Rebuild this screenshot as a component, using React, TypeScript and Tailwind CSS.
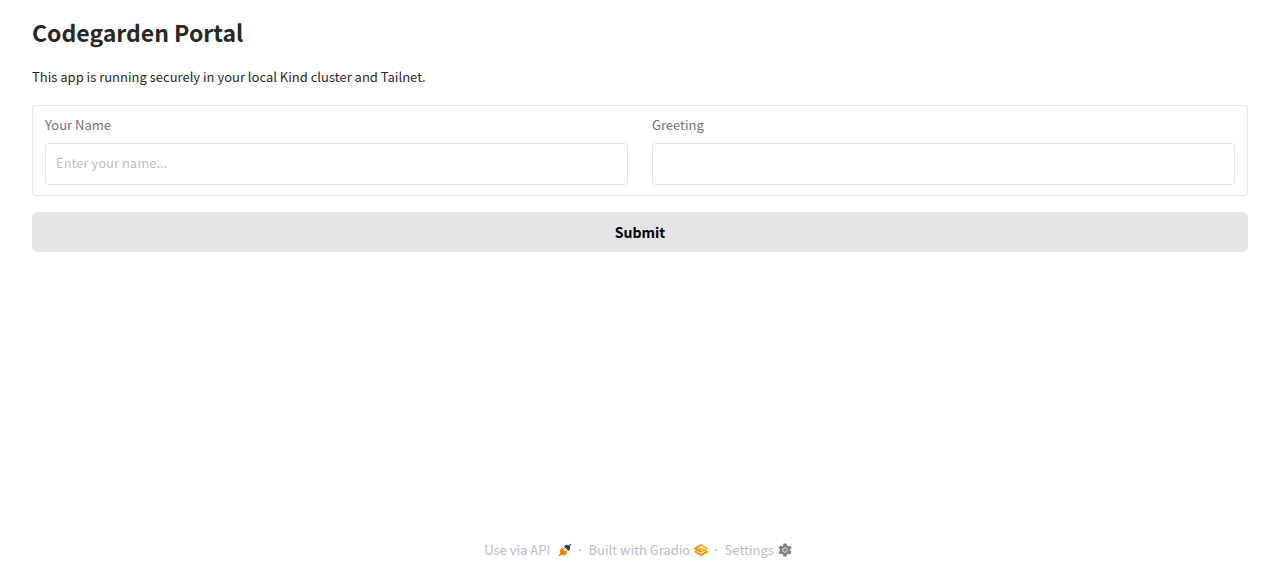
import React, { useState } from "react";


const PlugIcon = () => (
    <svg viewBox="0 0 28 28" className="ml-2 size-3.5" aria-hidden="true">
        <path d="M26.9 2.5 25.5 1.1 21.9 4.7C19.3 2.9 15.9 3.1 13.6 5.4L11.9 7.1 20.9 16.1 22.6 14.4C24.9 12.1 25.1 8.7 23.3 6.1L26.9 2.5Z" fill="#34445b" />
        <path d="M18.9 15.9 17.5 14.5 14.8 17.2 11.2 13.6 13.9 10.9 12.5 9.5 9.8 12.2 7.3 9.7 5.6 11.4C3.3 13.7 3.1 17.1 4.9 19.7L1.1 25.5 2.5 26.9 8.3 23.1C10.9 24.9 14.3 24.7 16.6 22.4L18.3 20.7 16.2 18.6 18.9 15.9Z" fill="#ff7c00" />
    </svg>
);

const GradioIcon = () => (
    <svg viewBox="0 0 28 24" className="ml-1 h-3 w-3.5" fill="none" strokeWidth="3" strokeLinejoin="round" aria-hidden="true">
        <path d="M2 15 14 8.500 26 15 14 22Z" stroke="#ffb41f" />
        <path d="M2 15 14 22 26 15" stroke="#ff8a00" />
        <path d="M2 9 14 2 26 9 14 15.500Z" stroke="#ffb41f" />
        <path d="M14 2 2 9 14 15.500" stroke="#ff8a00" />
    </svg>
);

const GearIcon = () => (
    <svg viewBox="0 0 28 28" className="ml-1 size-3.5" aria-hidden="true">
        <path
            d="M11 1h6l.8 4 2.2 1.3L24 5l3 5.2-3.1 2.6v2.4l3.1 2.6L24 23l-4-1.3-2.2 1.3-.8 4h-6l-.8-4L8 21.7 4 23l-3-5.2 3.1-2.6v-2.4L1 10.2 4 5l4 1.3L10.2 5Z"
            fill="#808080"
        />
        <circle cx="14" cy="14" r="4.5" fill="#808080" stroke="#e4e4e7" strokeWidth="2" />
    </svg>
);

const Divider = () => <span className="mx-1.5 font-['Liberation_Sans',sans-serif] font-bold">·</span>;

const App = () => {
    const [name, setName] = useState("");
    const [greeting, setGreeting] = useState("");

    const handleSubmit = (e: React.FormEvent) => {
        e.preventDefault();
        setGreeting(name ? `Hello, ${name}!` : "");
    };

    return (
        <div className="flex min-h-screen flex-col bg-white px-8 font-['Noto_Sans_CJK_SC',sans-serif] text-[13px] leading-5 text-[#27272a]">
            <main className="grow pt-4">
                <h1 className="text-[23px] leading-8 font-bold">Codegarden Portal</h1>
                <p className="mt-[19px]">This app is running securely in your local Kind cluster and Tailnet.</p>

                <form onSubmit={handleSubmit} className="mt-[18px] flex flex-col gap-4">
                    <div className="grid grid-cols-2 gap-6 rounded border border-[#e4e4e7] px-3 pt-[9px] pb-2.5">
                        <div className="flex flex-col gap-2 text-[#71717a]">
                            <label htmlFor="name">Your Name</label>
                            <input
                                id="name"
                                type="text"
                                value={name}
                                onChange={(e) => setName(e.target.value)}
                                placeholder="Enter your name..."
                                className="h-[42px] w-full rounded border border-[#e4e4e7] px-2.5 pb-1 text-[#27272a] placeholder:text-[#bbbbc2]"
                            />
                        </div>
                        <div className="flex flex-col gap-2 text-[#71717a]">
                            <label htmlFor="greeting">Greeting</label>
                            <input
                                id="greeting"
                                type="text"
                                value={greeting}
                                readOnly
                                className="h-[42px] w-full rounded border border-[#e4e4e7] px-2.5 pb-1 text-[#27272a]"
                            />
                        </div>
                    </div>

                    <button type="submit" className="h-10 w-full rounded-md bg-[#e4e4e7] text-sm font-bold text-black">
                        Submit
                    </button>
                </form>
            </main>

            <footer className="flex items-center justify-center pr-1 pb-[17px] text-[#bbbbc2]">
                <a href="#api" className="flex items-center">Use via API <PlugIcon /></a>
                <Divider />
                <a href="#gradio" className="flex items-center">Built with Gradio <GradioIcon /></a>
                <Divider />
                <a href="#settings" className="flex items-center">Settings <GearIcon /></a>
            </footer>
        </div>
    );
};

export default App;
